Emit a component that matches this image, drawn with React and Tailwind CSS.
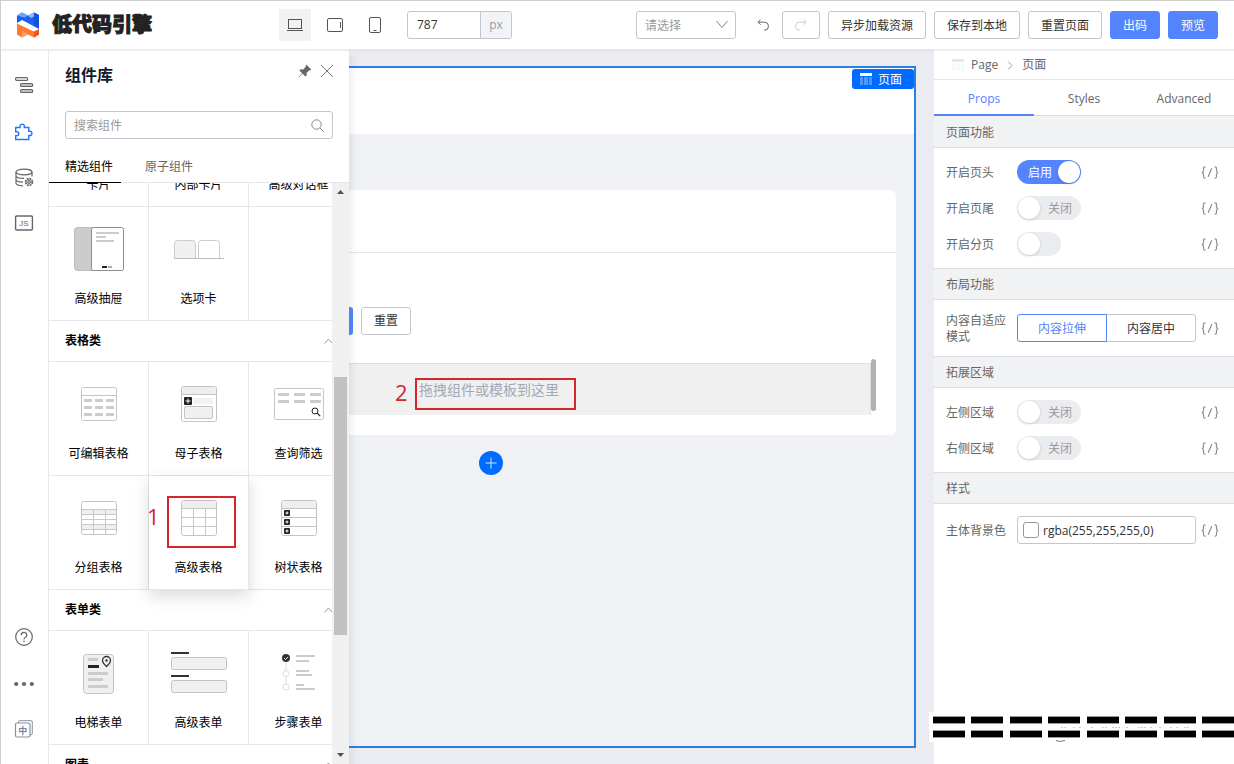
import { useState } from "react";
import clsx from "clsx";

/* ---------- component thumbnails, drawn in a 99x84 box ---------- */

function Dash({ x1, x2, y, w = 2, c = "#ccc" }) {
    return <line x1={x1} x2={x2} y1={y} y2={y} stroke={c} strokeWidth={w} />;
}

function PlusBox({ x, y, size = 6 }) {
    const m = size / 2;
    return (
        <g>
            <rect x={x} y={y} width={size} height={size} rx="1" fill="#222" />
            <path d={`M${x + m} ${y + 1.5}v${size - 3}M${x + 1.5} ${y + m}h${size - 3}`} stroke="#fff" strokeWidth="1" />
        </g>
    );
}

const thumbs = {
    drawer: (
        <>
            <rect x="25.5" y="20.5" width="30" height="43" rx="3" fill="#ccc" stroke="#bbb" />
            <rect x="42.5" y="20.5" width="32" height="43" rx="2" fill="#fff" stroke="#8c8c8c" />
            <Dash x1={47} x2={70} y={26} />
            <Dash x1={47} x2={57} y={30} />
            <Dash x1={47} x2={65} y={34} />
            <Dash x1={53} x2={58} y={60} c="#222" />
            <Dash x1={59} x2={63} y={60} c="#aaa" />
        </>
    ),
    tabs: (
        <>
            <path d="M25.5 51.5v-15a3 3 0 0 1 3-3h15a3 3 0 0 1 3 3v15" fill="#f0f0f0" stroke="#ccc" />
            <path d="M49.5 51.5v-15a3 3 0 0 1 3-3h15a3 3 0 0 1 3 3v15" fill="#fff" stroke="#ccc" />
            <path d="M25 51.5h50" stroke="#bbb" />
        </>
    ),
    editTable: (
        <>
            <rect x="32.5" y="25.5" width="35" height="33" rx="2" fill="#fff" stroke="#c4c4c4" />
            <path d="M32.5 33.5h35" stroke="#c4c4c4" />
            <path d="M35 38.5h8m3 0h8m3 0h8M35 45.5h8m3 0h8m3 0h8M35 52.5h8m3 0h8m3 0h8" stroke="#ccc" strokeWidth="3" />
        </>
    ),
    subTable: (
        <>
            <rect x="32.5" y="24.5" width="35" height="35" rx="2" fill="#fff" stroke="#c4c4c4" />
            <path d="M33 25h34v7.5H33z" fill="#eee" />
            <path d="M32.5 32.5h35" stroke="#c4c4c4" />
            <PlusBox x={35} y={35} size={8} />
            <rect x="44" y="36" width="20" height="6" fill="#f2f2f2" />
            <rect x="35.5" y="44.5" width="28" height="12" rx="1.5" fill="#f0f0f0" stroke="#c4c4c4" />
        </>
    ),
    filter: (
        <>
            <rect x="25.5" y="26.5" width="49" height="31" rx="2" fill="#fff" stroke="#c4c4c4" />
            <path d="M29 32.5h11m5 0h11m5 0h11M29 39.5h11m5 0h11m5 0h11" stroke="#ccc" strokeWidth="3" />
            <circle cx="66" cy="49" r="3" fill="none" stroke="#222" />
            <path d="M68.2 51.2l3 3" stroke="#222" strokeWidth="1.2" />
        </>
    ),
    groupTable: (
        <>
            <rect x="32.5" y="25.5" width="35" height="33" rx="2" fill="#fff" stroke="#c4c4c4" />
            <path d="M33 34h34v4H33zM33 49h34v4H33z" fill="#efefef" />
            <path d="M32.5 33.5h35m-35 5h35m-35 5h35m-35 5h35m-35 5h35M44.5 33.5v25m12-25v25" stroke="#c8c8c8" fill="none" />
        </>
    ),
    proTable: (
        <>
            <rect x="32.5" y="24.5" width="35" height="35" rx="2" fill="#fff" stroke="#c4c4c4" />
            <path d="M33 25h34v7.5H33z" fill="#eee" />
            <path d="M32.5 32.5h35m-35 9h35m-35 9h35M44.5 32.5v27m12-27v27" stroke="#c8c8c8" fill="none" />
        </>
    ),
    treeTable: (
        <>
            <rect x="32.5" y="24.5" width="35" height="35" rx="2" fill="#fff" stroke="#c4c4c4" />
            <path d="M33 25h34v7.5H33z" fill="#eee" />
            <path d="M32.5 32.5h35m-35 9h35m-35 9h35" stroke="#c4c4c4" fill="none" />
            <PlusBox x={35} y={34} />
            <PlusBox x={35} y={43} />
            <PlusBox x={35} y={52} />
        </>
    ),
    anchorForm: (
        <>
            <rect x="34.5" y="23.5" width="30" height="39" rx="3" fill="#f0f0f0" stroke="#c4c4c4" />
            <Dash x1={39} x2={49} y={28.5} w={3} />
            <Dash x1={39} x2={50} y={35.5} w={3} c="#222" />
            <Dash x1={39} x2={59} y={42.5} w={3} />
            <Dash x1={39} x2={54} y={48.5} w={3} />
            <Dash x1={39} x2={59} y={55.5} w={3} />
            <path d="M57.5 35.5c-2.4-2.2-4-3.9-4-6a4 4 0 0 1 8 0c0 2.1-1.6 3.8-4 6z" fill="#f0f0f0" stroke="#333" strokeWidth="1.3" />
            <circle cx="57.5" cy="29.5" r="1.2" fill="#333" />
        </>
    ),
    proForm: (
        <>
            <Dash x1={22} x2={40} y={22} c="#333" />
            <rect x="22.5" y="26.5" width="55" height="12" rx="2" fill="#f0f0f0" stroke="#c4c4c4" />
            <Dash x1={22} x2={40} y={45} c="#333" />
            <rect x="22.5" y="49.5" width="55" height="12" rx="2" fill="#f0f0f0" stroke="#c4c4c4" />
        </>
    ),
    stepForm: (
        <>
            <path d="M37 30v27" stroke="#ddd" />
            <circle cx="37" cy="27" r="4" fill="#333" />
            <path d="M35 27l1.5 1.5 2.5-2.5" stroke="#fff" fill="none" strokeWidth=".9" />
            <circle cx="37" cy="42.5" r="3" fill="#fff" stroke="#ddd" />
            <circle cx="37" cy="56" r="3" fill="#fff" stroke="#ddd" />
            <Dash x1={47} x2={66} y={25} />
            <Dash x1={47} x2={60} y={30} />
            <Dash x1={47} x2={60} y={40} />
            <Dash x1={47} x2={63} y={44} />
            <Dash x1={47} x2={55} y={54} />
            <Dash x1={47} x2={66} y={58} />
        </>
    ),
};

const groups = [
    {
        items: [
            { label: "卡片" },
            { label: "内部卡片" },
            { label: "高级对话框" },
            { label: "高级抽屉", thumb: "drawer" },
            { label: "选项卡", thumb: "tabs" },
        ],
    },
    {
        title: "表格类",
        items: [
            { label: "可编辑表格", thumb: "editTable" },
            { label: "母子表格", thumb: "subTable" },
            { label: "查询筛选", thumb: "filter" },
            { label: "分组表格", thumb: "groupTable" },
            { label: "高级表格", thumb: "proTable", active: true },
            { label: "树状表格", thumb: "treeTable" },
        ],
    },
    {
        title: "表单类",
        items: [
            { label: "电梯表单", thumb: "anchorForm" },
            { label: "高级表单", thumb: "proForm" },
            { label: "步骤表单", thumb: "stepForm" },
        ],
    },
    { title: "图表", items: [] },
];

/* ---------- header ---------- */

function Logo() {
    return (
        <svg width="24" height="26" viewBox="0 0 24 26">
            <path d="M1 3.5L6 .5l6 3 6-3 5 2.5v15L6 8.500 1 11z" fill="#1c62f0" />
            <path d="M1 3.500L6 .5l6 3-3.500 2z" fill="#6fa3ff" />
            <path d="M18 .5L23 3v15l-5-3z" fill="#1650dd" />
            <path d="M12 3.500l6-3v4L15 6z" fill="#8cb6ff" />
            <path d="M1 11l16 8 6-1v4.500l-5 3-6-3-6 3-5-3z" fill="#ff7a30" />
            <path d="M18 18.500l5-1.500v5.500l-5 3z" fill="#f2531c" />
            <path d="M6 18.500l6 4-6 3z" fill="#ffa46b" />
            <path d="M1 11.500l5-3.500 17 9-5 2.500z" fill="#fff" />
        </svg>
    );
}

function HeaderButton({ primary, children }) {
    return (
        <button
            className={clsx(
                "h-7 px-3 pt-px rounded-[3px] border text-xs whitespace-nowrap cursor-pointer",
                primary ? "bg-[#5584ff] border-[#5584ff] text-white" : "bg-white border-[#c4c6cf] text-[#333]"
            )}
        >
            {children}
        </button>
    );
}

function Header() {
    return (
        <header className="relative z-20 flex items-center h-[49px] shrink-0 bg-white border-b border-[#e8e9ec] pr-4 shadow-[0_1px_2px_rgba(31,56,88,0.08)]">
            <div className="flex items-center gap-3 w-[278px] shrink-0 pl-[15px]">
                <Logo />
                <h1 className="text-xl leading-6 font-black text-[#222] whitespace-nowrap [-webkit-text-stroke:1px_#222]">低代码引擎</h1>
            </div>

            <div className="flex items-center gap-2">
                <button aria-label="桌面" className="w-8 h-8 bg-[#f2f2f2] flex items-center justify-center">
                    <svg width="16" height="14" viewBox="0 0 16 14" fill="none" stroke="#555">
                        <rect x="1.5" y="1.5" width="13" height="9" />
                        <path d="M0 12.5h16" />
                    </svg>
                </button>
                <button aria-label="平板" className="w-8 h-8 flex items-center justify-center">
                    <svg width="16" height="14" viewBox="0 0 16 14" fill="none" stroke="#555">
                        <rect x=".5" y=".5" width="15" height="13" rx="1.5" />
                        <path d="M13.5 4v6" />
                    </svg>
                </button>
                <button aria-label="手机" className="w-8 h-8 flex items-center justify-center">
                    <svg width="12" height="16" viewBox="0 0 12 16" fill="none" stroke="#555">
                        <rect x=".5" y=".5" width="11" height="15" rx="1.5" />
                        <path d="M4.500 13.500h3" />
                    </svg>
                </button>
                <div className="ml-2 flex h-7 rounded-[3px] border border-[#c4c6cf] overflow-hidden text-xs">
                    <input aria-label="宽度" defaultValue="787" className="w-[72px] pl-[9px] text-[#333] outline-none" />
                    <span className="w-[31px] flex items-center justify-center bg-[#f2f3f7] border-l border-[#c4c6cf] text-[#999]">px</span>
                </div>
            </div>

            <div className="ml-auto flex items-center gap-2">
                <div className="relative">
                    <select aria-label="请选择" className="appearance-none w-[100px] h-7 pl-2 pt-px rounded-[3px] border border-[#c4c6cf] bg-white text-xs text-[#999]">
                        <option>请选择</option>
                    </select>
                    <svg className="absolute right-2 top-[9px] pointer-events-none" width="12" height="9" viewBox="0 0 12 9" fill="none" stroke="#888">
                        <path d="M.5 1L6 7.500 11.500 1" />
                    </svg>
                </div>
                <div className="flex">
                    <button aria-label="撤销" className="w-[38px] h-7 flex items-center justify-center">
                        <svg width="12" height="12" viewBox="0 0 12 12" fill="none" stroke="#666">
                            <path d="M3.500 .8L1 3.200l2.500 2.500M1 3.200h6.500a4 4 0 0 1 0 8H7" />
                        </svg>
                    </button>
                    <button aria-label="重做" disabled className="w-[38px] h-7 flex items-center justify-center rounded-[3px] border border-[#c4c6cf]">
                        <svg width="12" height="12" viewBox="0 0 12 12" fill="none" stroke="#ccc">
                            <path d="M8.500 .8L11 3.200 8.500 5.700M11 3.200H4.500a4 4 0 0 0 0 8H5" />
                        </svg>
                    </button>
                </div>
                <HeaderButton>异步加载资源</HeaderButton>
                <HeaderButton>保存到本地</HeaderButton>
                <HeaderButton>重置页面</HeaderButton>
                <HeaderButton primary>出码</HeaderButton>
                <HeaderButton primary>预览</HeaderButton>
            </div>
        </header>
    );
}

/* ---------- left rail ---------- */

function RailButton({ label, children }) {
    return (
        <button aria-label={label} className="w-full h-[46px] pr-px flex items-center justify-center cursor-pointer">
            <svg width="20" height="20" viewBox="0 0 20 20" fill="none" stroke="#666" strokeWidth="1.2">
                {children}
            </svg>
        </button>
    );
}

function Rail() {
    return (
        <nav className="w-12 shrink-0 flex flex-col justify-between py-3 pr-px bg-white border-r border-[#e8e9ec]">
            <div>
                <RailButton label="大纲树">
                    <rect x="1.6" y="2.6" width="12" height="2.8" rx="1" />
                    <rect x="6.6" y="8.6" width="12" height="2.8" rx="1" fill="#ddd" />
                    <rect x="6.6" y="14.6" width="12" height="2.800" rx="1" fill="#ddd" />
                </RailButton>
                <RailButton label="组件库">
                    <path
                        stroke="#2077ff"
                        strokeWidth="1.4"
                        d="M1.700 6.500H6V5.300a2.200 2.200 0 0 1 4.400 0v1.200h4.400v3.800h1a2.100 2.100 0 0 1 0 4.200h-1v4H1.700v-3.900h1.100a1.900 1.900 0 0 0 0-3.900H1.700z"
                    />
                </RailButton>
                <RailButton label="数据源">
                    <ellipse cx="10" cy="5" rx="8" ry="2.8" />
                    <path d="M2 5v11c0 1.500 3 2.700 7 2.800M18 5v4.500M2 8.700c0 1.500 3 2.700 8 2.700M2 12.500c0 1.400 2.500 2.500 7 2.700" />
                    <circle cx="15" cy="15" r="3.300" strokeWidth="2" strokeDasharray="1.8 .8" />
                    <circle cx="15" cy="15" r="1.300" />
                </RailButton>
                <RailButton label="源码面板">
                    <rect x="1.6" y="3" width="16.800" height="14" rx="1" strokeWidth="1.4" />
                    <text x="10" y="13" textAnchor="middle" fontSize="8" fill="#666" stroke="none" fontFamily="Liberation Sans">JS</text>
                </RailButton>
            </div>
            <div>
                <RailButton label="帮助">
                    <circle cx="10" cy="10" r="8.3" />
                    <path d="M7.300 8.200a2.700 2.700 0 1 1 3.900 2.300c-.8.4-1.200.9-1.200 1.900M10 13.600v1.400" />
                </RailButton>
                <RailButton label="更多">
                    <g fill="#666" stroke="none">
                        <circle cx="2.200" cy="11" r="2.100" />
                        <circle cx="10" cy="11" r="2.100" />
                        <circle cx="17.800" cy="11" r="2.100" />
                    </g>
                </RailButton>
                <RailButton label="语言">
                    <path d="M4.500 3.800V3a1.300 1.300 0 0 1 1.300-1.300H17A1.300 1.300 0 0 1 18.300 3v11.500a1.300 1.300 0 0 1-1.300 1.300h-.8" stroke="#8a90a0" strokeWidth="1" />
                    <rect x="1.500" y="4" width="14.500" height="14" rx="1.500" stroke="#8a90a0" />
                    <text x="8.800" y="14.500" textAnchor="middle" fontSize="9" fontWeight="700" fill="#7a839c" stroke="none">中</text>
                </RailButton>
            </div>
        </nav>
    );
}

/* ---------- component library ---------- */

function ComponentCard({ item }) {
    return (
        <div
            className={clsx(
                "relative h-[114px] bg-white border-r border-b border-[#e6e7eb] cursor-pointer",
                item.active && "z-10 shadow-[0_6px_16px_rgba(0,0,0,0.15)]"
            )}
        >
            <svg className="block w-full h-[84px]" viewBox="0 0 99 84" fill="none">
                {thumbs[item.thumb]}
            </svg>
            <div className="text-xs leading-4 text-center text-black whitespace-nowrap">{item.label}</div>
            {item.active && (
                <>
                    <span className="absolute left-[18px] top-5 w-[69px] h-[52px] border-2 border-[#d5252d]"></span>
                    <span className="absolute -left-[2px] top-7 text-[22px] leading-6 text-[#d5252d]">1</span>
                </>
            )}
        </div>
    );
}

function ComponentPanel() {
    const [tab, setTab] = useState(0);
    return (
        <aside className="relative z-10 w-[300px] shrink-0 flex flex-col bg-white shadow-[4px_6px_6px_rgba(31,50,88,0.08)]">
            <div className="h-[50px] shrink-0 flex items-center pl-4 pr-[15px]">
                <h2 className="text-base font-bold text-[#111a2c]">组件库</h2>
                <button aria-label="固定" className="ml-auto -mt-2">
                    <svg width="14" height="14" viewBox="0 0 14 14">
                        <path d="M8.500 .8l4.700 4.700-1 .9-.9-.2-2.700 2.700.1 2.600-1.200 1.100-2.900-2.900L1 13.300l-.4-.4 3.600-3.700-2.800-2.800 1.100-1.100 2.700.1L7.800 2.700 7.600 1.700z" fill="#666" />
                    </svg>
                </button>
                <button aria-label="关闭" className="ml-2 -mt-2">
                    <svg width="14" height="14" viewBox="0 0 14 14" stroke="#777">
                        <path d="M1 1l12 12M13 1L1 13" />
                    </svg>
                </button>
            </div>

            <label className="mt-[11px] mx-4 h-7 shrink-0 flex items-center px-2 rounded-[3px] border border-[#c4c6cf]">
                <input placeholder="搜索组件" aria-label="搜索组件" className="flex-1 min-w-0 pt-px text-xs outline-none placeholder:text-[#999]" />
                <svg width="13" height="13" viewBox="0 0 13 13" fill="none" stroke="#888">
                    <circle cx="5.500" cy="5.500" r="4.700" />
                    <path d="M9 9l3.500 3.500" />
                </svg>
            </label>

            <div className="mt-3 h-8 shrink-0 flex text-xs border-b border-[#e6e7eb]">
                {["精选组件", "原子组件"].map((name, i) => (
                    <button
                        key={name}
                        onClick={() => setTab(i)}
                        className={clsx(
                            "pl-4 pr-2 mr-2 h-8 pt-px border-b cursor-pointer",
                            tab === i ? "border-black text-black" : "border-transparent text-[#666]"
                        )}
                    >
                        {name}
                    </button>
                ))}
            </div>

            <div className="relative flex-1 min-h-0 overflow-hidden">
                <div className="-mt-[90px]">
                    {groups.map((group, i) => (
                        <section key={i}>
                            {group.title && (
                                <button className="w-full h-[41px] flex items-center justify-between pl-4 pr-4 border-b border-[#e6e7eb] text-xs font-bold text-black">
                                    {group.title}
                                    <svg width="9" height="6" viewBox="0 0 9 6" fill="none" stroke="#999">
                                        <path d="M.5 5.500l4-4.500 4 4.500" />
                                    </svg>
                                </button>
                            )}
                            <div className="grid grid-cols-3">
                                {group.items.map((item) => (
                                    <ComponentCard key={item.label} item={item} />
                                ))}
                                {group.items.length % 3 === 2 && <div className="border-b border-[#e6e7eb]"></div>}
                            </div>
                        </section>
                    ))}
                </div>

                {/* scrollbar */}
                <div className="absolute z-20 inset-y-0 right-0 w-[17px] flex flex-col items-center bg-[#f0f0f1] py-[6px]">
                    <svg width="7" height="5" viewBox="0 0 7 5"><path d="M0 5l3.500-4L7 5z" fill="#505050" /></svg>
                    <div className="flex-1 w-full flex flex-col px-[2px]">
                        <div className="h-[183px]"></div>
                        <div className="h-[258px] bg-[#c1c1c1]"></div>
                    </div>
                    <svg width="7" height="5" viewBox="0 0 7 5"><path d="M0 0l3.500 4L7 0z" fill="#505050" /></svg>
                </div>
            </div>
        </aside>
    );
}

/* ---------- canvas ---------- */

function PageIcon({ color }) {
    return (
        <svg width="12" height="12" viewBox="0 0 12 12" fill={color}>
            <path d="M0 0h12v3H0z" />
            <path d="M0 4h3v8H0zM4 4h4v8H4zM9 4h3v8H9z" opacity=".3" />
        </svg>
    );
}

function Canvas() {
    return (
        <main className="flex-1 min-w-0 flex bg-[#ebecf1] pt-4 pb-4 pr-[18px]">
            <div className="flex-1 min-w-0 relative border-2 border-l-0 border-[#2b7fe3] bg-[#eff1f5]">
                <div className="h-[66px] bg-white"></div>
                <div className="absolute right-0 top-px h-5 px-2 flex items-center gap-[6px] rounded-[3px] bg-[#006cff] text-xs text-white">
                    <PageIcon color="#fff" />
                    <span className="pt-px pr-1">页面</span>
                </div>

                <div className="mt-14 mr-[18px] bg-white rounded-r-md">
                    <div className="h-[63px] border-b border-[#e6e7eb]"></div>
                    <div className="pt-[54px] flex gap-2">
                        <span className="w-1 h-7 rounded-r-[3px] bg-[#5584ff]"></span>
                        <button className="h-7 px-3 rounded-[3px] border border-[#c4c6cf] text-xs text-[#333] cursor-pointer">重置</button>
                    </div>
                    <div className="pt-6 pb-5 pr-5 flex items-start">
                        <div className="mt-1 flex-1 h-[52px] flex items-center bg-[#f0f0f0] border-t border-r border-[#dcdee3]">
                            <span className="ml-[46px] w-5 pt-1 text-[22px] leading-6 text-[#d5252d]">2</span>
                            <div className="w-[161px] h-8 mt-2 px-[2px] border-2 border-[#d5252d] text-sm leading-5 text-[#a3a9b3] whitespace-nowrap">
                                拖拽组件或模板到这里
                            </div>
                        </div>
                        <div className="w-[5px] h-[52px] rounded-full bg-[#b3b3b3]"></div>
                    </div>
                </div>

                <button aria-label="添加" className="mt-4 ml-[130px] w-6 h-6 rounded-full bg-[#006cff] flex items-center justify-center cursor-pointer">
                    <svg width="12" height="12" viewBox="0 0 12 12" stroke="#cfe2ff">
                        <path d="M6 .5v11M.5 6h11" />
                    </svg>
                </button>
            </div>
        </main>
    );
}

/* ---------- settings ---------- */

function BindIcon() {
    return (
        <button aria-label="绑定变量" className="ml-auto w-[18px] shrink-0 cursor-pointer">
            <svg width="18" height="13" viewBox="0 0 18 13" fill="none" stroke="#888e9a" strokeWidth="1.2">
                <path d="M4.500 .8H4A1.500 1.500 0 0 0 2.500 2.300v2.400C2.500 5.700 2 6.300.8 6.500c1.200.2 1.700.8 1.700 1.800v2.400A1.500 1.500 0 0 0 4 12.200h.5" />
                <path d="M10.800 2.300L7.200 10.700" />
                <path d="M13.500 .8h.5a1.500 1.500 0 0 1 1.500 1.500v2.400c0 1 .5 1.600 1.700 1.800-1.200.2-1.700.8-1.700 1.800v2.400a1.500 1.500 0 0 1-1.500 1.500h-.5" />
            </svg>
        </button>
    );
}

function Section({ title, first, children }) {
    return (
        <section>
            <h3 className={clsx("h-8 flex items-center px-3 pt-[2px] bg-[#f1f2f4] border-b border-[#dcdee3] text-xs text-[#666]", !first && "border-t")}>
                {title}
            </h3>
            <div className="py-[6px]">{children}</div>
        </section>
    );
}

function Field({ label, id, size = "h-9", children }) {
    return (
        <div className={clsx("flex items-center pl-3 pr-[15px]", size)}>
            <label htmlFor={id} className="w-[60px] mr-[11px] pt-[2px] shrink-0 text-xs leading-4 text-[#666]">{label}</label>
            {children}
            <BindIcon />
        </div>
    );
}

function SwitchField({ label, id, initial = false, text = true }) {
    const [on, setOn] = useState(initial);
    return (
        <Field label={label} id={id}>
            <label
                className={clsx(
                    "relative h-6 flex items-center rounded-full p-px text-xs cursor-pointer",
                    text ? "w-16" : "w-11",
                    on ? "bg-[#5584ff] text-white flex-row-reverse" : "bg-[#ebecf0] text-[#999]"
                )}
            >
                <input id={id} type="checkbox" role="switch" className="sr-only" checked={on} onChange={() => setOn(!on)} />
                <span className="w-[22px] h-[22px] shrink-0 rounded-full bg-white shadow-[0_1px_3px_rgba(0,0,0,0.16)]"></span>
                {text && <span className={clsx("flex-1 pt-px text-center", on ? "pl-1" : "")}>{on ? "启用" : "关闭"}</span>}
            </label>
        </Field>
    );
}

function Settings() {
    const [mode, setMode] = useState(0);
    return (
        <aside className="relative w-[300px] shrink-0 bg-white text-[#666]">
            <div className="h-[30px] flex items-center pl-[18px] pt-px border-b border-[#e6e7eb] text-xs">
                <PageIcon color="#e6e7eb" />
                <span className="ml-[7px]">Page</span>
                <svg className="mx-[9px]" width="6" height="9" viewBox="0 0 6 9" fill="none" stroke="#999">
                    <path d="M1 .5l4 4-4 4" />
                </svg>
                <span>页面</span>
            </div>

            <div className="h-9 grid grid-cols-3 text-xs border-b border-[#dcdee3]">
                {["Props", "Styles", "Advanced"].map((name, i) => (
                    <button key={name} className={clsx("h-9 pt-[3px] border-b-2 cursor-pointer", i === 0 ? "border-[#5584ff] text-[#5584ff]" : "border-transparent")}>
                        {name}
                    </button>
                ))}
            </div>

            <Section title="页面功能" first>
                <SwitchField label="开启页头" id="page-header" initial />
                <SwitchField label="开启页尾" id="page-footer" />
                <SwitchField label="开启分页" id="page-tabs" text={false} />
            </Section>

            <Section title="布局功能">
                <Field label="内容自适应模式" size="h-11">
                    <div className="w-[179px] h-7 flex text-xs">
                        {["内容拉伸", "内容居中"].map((name, i) => (
                            <button
                                key={name}
                                onClick={() => setMode(i)}
                                className={clsx(
                                    "flex-1 pt-px border cursor-pointer",
                                    i === 0 ? "rounded-l-[3px]" : "rounded-r-[3px] -ml-px",
                                    mode === i ? "relative border-[#5584ff] text-[#5584ff]" : "border-[#c4c6cf] text-[#333]"
                                )}
                            >
                                {name}
                            </button>
                        ))}
                    </div>
                </Field>
            </Section>

            <Section title="拓展区域">
                <SwitchField label="左侧区域" id="aside-left" />
                <SwitchField label="右侧区域" id="aside-right" />
            </Section>

            <Section title="样式">
                <Field label="主体背景色" id="bg-color" size="h-10">
                    <div className="w-[179px] h-7 flex items-center gap-1 px-[5px] rounded-[3px] border border-[#c4c6cf]">
                        <span className="w-4 h-4 shrink-0 rounded-[3px] border border-[#999]"></span>
                        <input id="bg-color" defaultValue="rgba(255,255,255,0)" className="flex-1 min-w-0 pt-px text-xs text-[#333] outline-none" />
                    </div>
                </Field>
            </Section>

            {/* bars over the footer strip */}
            <div className="absolute right-0 bottom-[22px] w-[305px] pl-1 py-1 flex flex-col gap-[6px] bg-white">
                {[0, 1].map((row) => (
                    <div key={row} className="flex justify-between">
                        {[0, 1, 2, 3, 4, 5, 6, 7].map((n) => (
                            <span key={n} className="w-8 h-2 bg-black border-y border-[#999]"></span>
                        ))}
                    </div>
                ))}
                <svg className="absolute right-4 bottom-0 w-[168px] h-5" viewBox="0 0 168 20" fill="none" stroke="#ccc">
                    <path d="M11 5.500h6m6 0h2m4 0h2m10 0h3m8 0h6m4 0h9m5 0h2m10 0h8m4 0h3m6 0h2m9 0h3m3 0h3m5 0h5" strokeDasharray="2 1" />
                    <path d="M6 18.500q4 2 9 0" stroke="#777" />
                </svg>
            </div>
        </aside>
    );
}

export default function App() {
    return (
        <div className="h-screen flex flex-col overflow-hidden border-t border-l border-[#cfcfcf] bg-white font-['Open_Sans','Noto_Sans_CJK_SC',sans-serif]">
            <Header />
            <div className="flex-1 min-h-0 flex">
                <Rail />
                <ComponentPanel />
                <Canvas />
                <Settings />
            </div>
        </div>
    );
}
